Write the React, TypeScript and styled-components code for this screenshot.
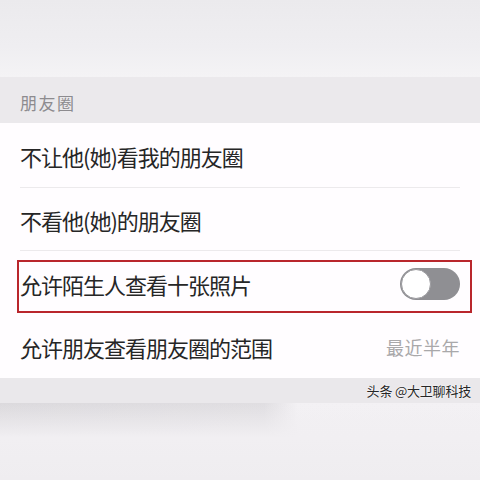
import React from "react";
import styled, { createGlobalStyle } from "styled-components";

const Global = createGlobalStyle`
  html, body { margin: 0; padding: 0; background: #f2f0f3; }
  body { width: 480px; height: 480px; overflow: hidden; font-family: "Noto Sans CJK SC", "Noto Sans", sans-serif; }
`;

const Page = styled.div`
  width: 480px;
  height: 480px;
  display: flex;
  flex-direction: column;
`;

const TopBlank = styled.div`
  height: 77px;
  background: linear-gradient(180deg, #ebeaed 0%, #efeef1 60%, #f4f3f5 100%);
`;

const SectionHeader = styled.div`
  height: 46px;
  background: #ebe9ec;
  display: flex;
  align-items: center;
  padding-left: 20px;
  padding-top: 4px;
  box-sizing: border-box;
  font-size: 17px;
  letter-spacing: 1.5px;
  color: #8d8b8f;
`;

const List = styled.div`
  background: #fffdff;
  display: flex;
  flex-direction: column;
`;

const Row = styled.div<{ $h: number; $divider?: boolean }>`
  position: relative;
  height: ${(p) => p.$h}px;
  display: flex;
  align-items: center;
  justify-content: space-between;
  padding: 0 20px;
  &::after {
    content: "";
    display: ${(p) => (p.$divider ? "block" : "none")};
    position: absolute;
    left: 20px;
    right: 20px;
    bottom: 0;
    height: 1px;
    background: #eceaec;
  }
`;

const Label = styled.span`
  font-size: 22px;
  color: #262626;
  letter-spacing: -1px;
`;

const Value = styled.span`
  font-size: 18px;
  letter-spacing: 0.5px;
  color: #a9a8aa;
`;

const Highlight = styled.div`
  position: absolute;
  left: 17px;
  top: 9px;
  width: 455px;
  height: 53px;
  box-sizing: border-box;
  border: 2.5px solid #b9262c;
  pointer-events: none;
`;

const Toggle = styled.div`
  width: 60px;
  height: 32px;
  border-radius: 16px;
  background: #8f8f93;
  display: flex;
  align-items: center;
  padding: 1px;
  box-sizing: border-box;
`;

const Knob = styled.div`
  width: 30px;
  height: 30px;
  border-radius: 50%;
  background: #ffffff;
  box-sizing: border-box;
  border: 1px solid #9a9a9e;
`;

const Footer = styled.div`
  height: 25px;
  background: #eae8eb;
  display: flex;
  align-items: center;
  justify-content: flex-end;
  padding-right: 9px;
`;

const Watermark = styled.span`
  font-size: 13px;
  color: #262626;
  letter-spacing: -0.2px;
  text-shadow: 0 0 2px #ffffff, 0 0 1px #ffffff;
`;

const BottomBlur = styled.div`
  flex: 1;
  position: relative;
  overflow: hidden;
  background:
    linear-gradient(90deg, rgba(200, 198, 202, 0.55) 0%, rgba(205, 203, 207, 0.5) 55%, rgba(255, 255, 255, 0) 62%),
    linear-gradient(180deg, #f3f1f4 0%, #efedf0 100%);
  &::before {
    content: "";
    position: absolute;
    inset: 0;
    background: linear-gradient(180deg, rgba(243, 241, 244, 0) 0%, #f1eff2 45%, #efedf0 100%);
  }
`;

export default function App() {
  return (
    <Page>
      <Global />
      <TopBlank />
      <SectionHeader>朋友圈</SectionHeader>
      <List>
        <Row $h={65} $divider>
          <Label>不让他(她)看我的朋友圈</Label>
        </Row>
        <Row $h={63} $divider>
          <Label>不看他(她)的朋友圈</Label>
        </Row>
        <Row $h={65}>
          <Label>允许陌生人查看十张照片</Label>
          <Toggle>
            <Knob />
          </Toggle>
          <Highlight />
        </Row>
        <Row $h={62}>
          <Label>允许朋友查看朋友圈的范围</Label>
          <Value>最近半年</Value>
        </Row>
      </List>
      <Footer>
        <Watermark>头条 @大卫聊科技</Watermark>
      </Footer>
      <BottomBlur />
    </Page>
  );
}
